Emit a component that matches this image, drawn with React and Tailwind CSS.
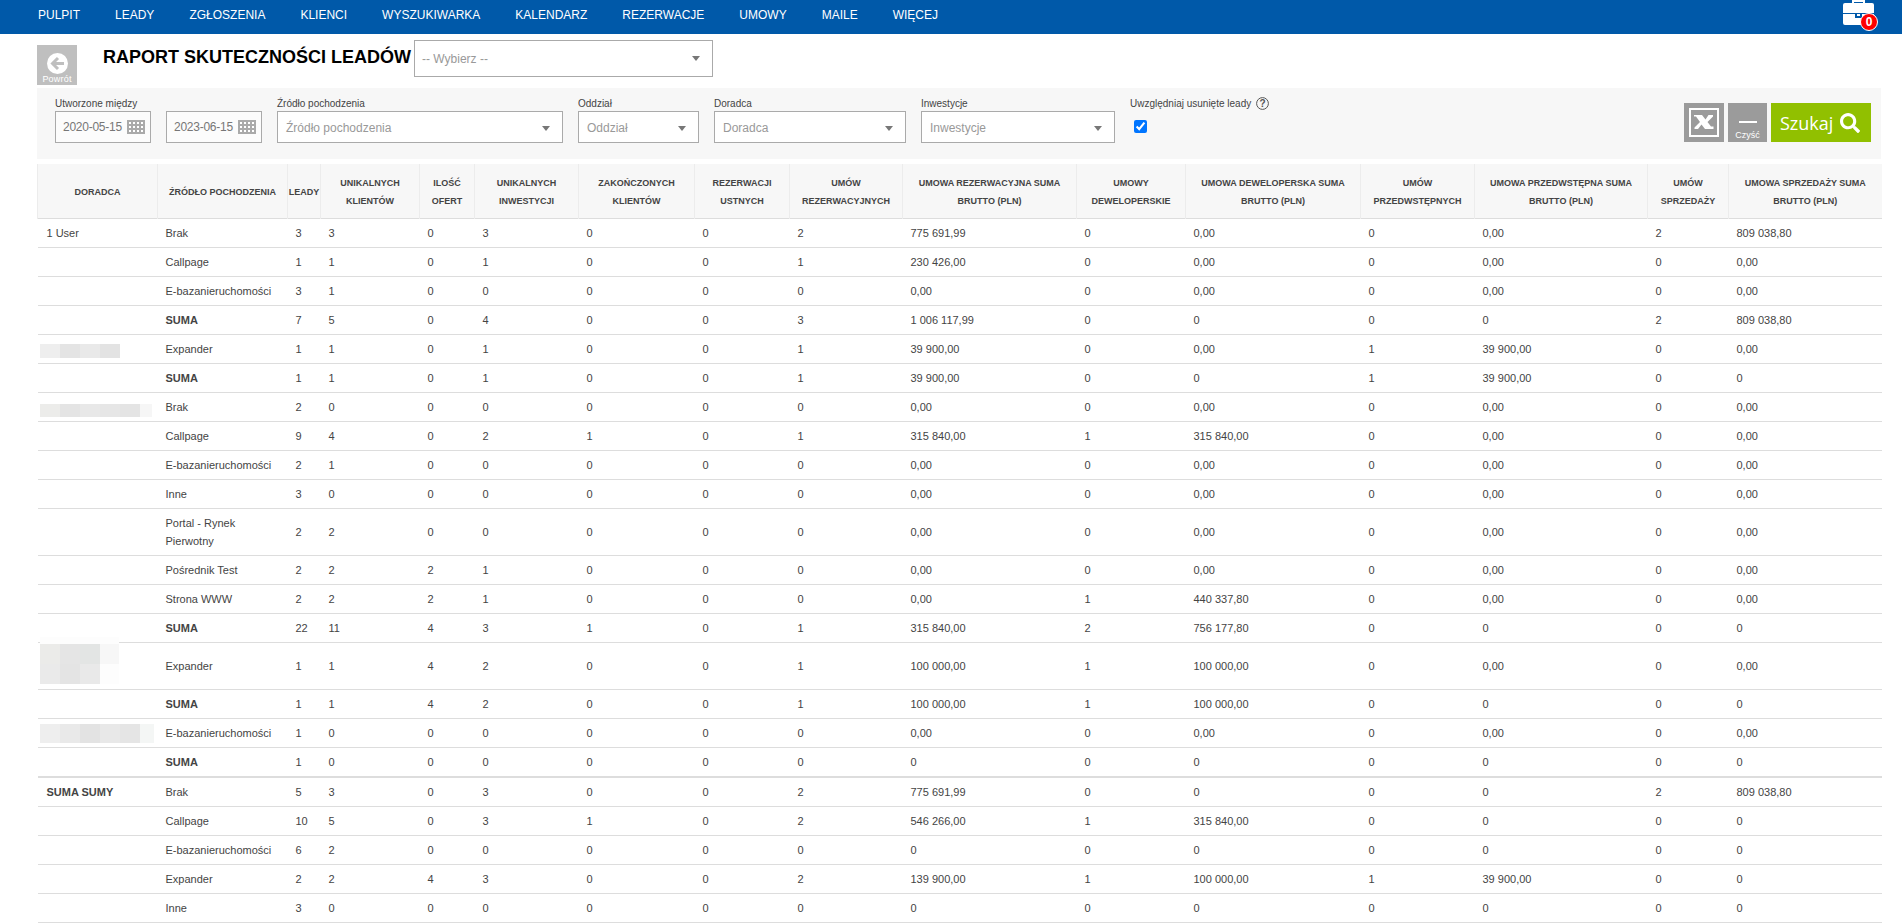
import React from 'react';
import { FaSearch } from 'react-icons/fa';

const menu = [
  'PULPIT',
  'LEADY',
  'ZGŁOSZENIA',
  'KLIENCI',
  'WYSZUKIWARKA',
  'KALENDARZ',
  'REZERWACJE',
  'UMOWY',
  'MAILE',
  'WIĘCEJ',
];

const columns = [
  { lines: ['DORADCA'], width: 120 },
  { lines: ['ŹRÓDŁO POCHODZENIA'], width: 130 },
  { lines: ['LEADY'], width: 33 },
  { lines: ['UNIKALNYCH', 'KLIENTÓW'], width: 99 },
  { lines: ['ILOŚĆ', 'OFERT'], width: 55 },
  { lines: ['UNIKALNYCH', 'INWESTYCJI'], width: 104 },
  { lines: ['ZAKOŃCZONYCH', 'KLIENTÓW'], width: 116 },
  { lines: ['REZERWACJI', 'USTNYCH'], width: 95 },
  { lines: ['UMÓW', 'REZERWACYJNYCH'], width: 113 },
  { lines: ['UMOWA REZERWACYJNA SUMA', 'BRUTTO (PLN)'], width: 174 },
  { lines: ['UMOWY', 'DEWELOPERSKIE'], width: 109 },
  { lines: ['UMOWA DEWELOPERSKA SUMA', 'BRUTTO (PLN)'], width: 175 },
  { lines: ['UMÓW', 'PRZEDWSTĘPNYCH'], width: 114 },
  { lines: ['UMOWA PRZEDWSTĘPNA SUMA', 'BRUTTO (PLN)'], width: 173 },
  { lines: ['UMÓW', 'SPRZEDAŻY'], width: 81 },
  { lines: ['UMOWA SPRZEDAŻY SUMA', 'BRUTTO (PLN)'], width: 153 },
];

const rows = [
  ['1 User', 'Brak', '3', '3', '0', '3', '0', '0', '2', '775 691,99', '0', '0,00', '0', '0,00', '2', '809 038,80'],
  ['', 'Callpage', '1', '1', '0', '1', '0', '0', '1', '230 426,00', '0', '0,00', '0', '0,00', '0', '0,00'],
  ['', 'E-bazanieruchomości', '3', '1', '0', '0', '0', '0', '0', '0,00', '0', '0,00', '0', '0,00', '0', '0,00'],
  ['', 'SUMA', '7', '5', '0', '4', '0', '0', '3', '1 006 117,99', '0', '0', '0', '0', '2', '809 038,80'],
  ['mask:a', 'Expander', '1', '1', '0', '1', '0', '0', '1', '39 900,00', '0', '0,00', '1', '39 900,00', '0', '0,00'],
  ['', 'SUMA', '1', '1', '0', '1', '0', '0', '1', '39 900,00', '0', '0', '1', '39 900,00', '0', '0'],
  ['mask:b', 'Brak', '2', '0', '0', '0', '0', '0', '0', '0,00', '0', '0,00', '0', '0,00', '0', '0,00'],
  ['', 'Callpage', '9', '4', '0', '2', '1', '0', '1', '315 840,00', '1', '315 840,00', '0', '0,00', '0', '0,00'],
  ['', 'E-bazanieruchomości', '2', '1', '0', '0', '0', '0', '0', '0,00', '0', '0,00', '0', '0,00', '0', '0,00'],
  ['', 'Inne', '3', '0', '0', '0', '0', '0', '0', '0,00', '0', '0,00', '0', '0,00', '0', '0,00'],
  ['', 'Portal - Rynek Pierwotny', '2', '2', '0', '0', '0', '0', '0', '0,00', '0', '0,00', '0', '0,00', '0', '0,00'],
  ['', 'Pośrednik Test', '2', '2', '2', '1', '0', '0', '0', '0,00', '0', '0,00', '0', '0,00', '0', '0,00'],
  ['', 'Strona WWW', '2', '2', '2', '1', '0', '0', '0', '0,00', '1', '440 337,80', '0', '0,00', '0', '0,00'],
  ['', 'SUMA', '22', '11', '4', '3', '1', '0', '1', '315 840,00', '2', '756 177,80', '0', '0', '0', '0'],
  ['mask:c', 'Expander', '1', '1', '4', '2', '0', '0', '1', '100 000,00', '1', '100 000,00', '0', '0,00', '0', '0,00'],
  ['', 'SUMA', '1', '1', '4', '2', '0', '0', '1', '100 000,00', '1', '100 000,00', '0', '0', '0', '0'],
  ['mask:d', 'E-bazanieruchomości', '1', '0', '0', '0', '0', '0', '0', '0,00', '0', '0,00', '0', '0,00', '0', '0,00'],
  ['', 'SUMA', '1', '0', '0', '0', '0', '0', '0', '0', '0', '0', '0', '0', '0', '0'],
];

const totals = [
  ['SUMA SUMY', 'Brak', '5', '3', '0', '3', '0', '0', '2', '775 691,99', '0', '0', '0', '0', '2', '809 038,80'],
  ['', 'Callpage', '10', '5', '0', '3', '1', '0', '2', '546 266,00', '1', '315 840,00', '0', '0', '0', '0'],
  ['', 'E-bazanieruchomości', '6', '2', '0', '0', '0', '0', '0', '0', '0', '0', '0', '0', '0', '0'],
  ['', 'Expander', '2', '2', '4', '3', '0', '0', '2', '139 900,00', '1', '100 000,00', '1', '39 900,00', '0', '0'],
  ['', 'Inne', '3', '0', '0', '0', '0', '0', '0', '0', '0', '0', '0', '0', '0', '0'],
];

// Hidden advisor names
const Mask = ({ type }) => {
  if (type === 'a') {
    return (
      <div className="flow-root h-[18px]">
        <div className="mt-1 -ml-[7px] flex h-3.5">
          <div className="w-5 bg-[#eeeeee]" />
          <div className="w-5 bg-[#e4e4e4]" />
          <div className="w-5 bg-[#e9e9e9]" />
          <div className="w-5 bg-[#e3e3e3]" />
        </div>
      </div>
    );
  }
  if (type === 'b') {
    return (
      <div className="flow-root h-[18px]">
        <div className="mt-1.5 -ml-[7px] flex h-[13px]">
          <div className="w-5 bg-[#ececea]" />
          <div className="w-5 bg-[#e4e4e4]" />
          <div className="w-5 bg-[#e8e8e8]" />
          <div className="w-5 bg-[#e6e6e6]" />
          <div className="w-5 bg-[#e4e4e4]" />
          <div className="w-3 bg-[#f6f6f6]" />
        </div>
      </div>
    );
  }
  if (type === 'c') {
    return (
      <div className="flow-root h-9">
        <div className="relative z-10 -mt-[11px] -ml-[7px] w-[79px] bg-[#fdfdfd] pt-[7px]">
          <div className="flex h-5">
            <div className="w-5 bg-[#ebebe9]" />
            <div className="w-5 bg-[#e5e5e5]" />
            <div className="w-5 bg-[#e3e5e4]" />
            <div className="w-[19px] bg-[#f7f7f7]" />
          </div>
          <div className="flex h-5">
            <div className="w-5 bg-[#eaeaea]" />
            <div className="w-5 bg-[#e4e4e4]" />
            <div className="w-5 bg-[#e9e9e9]" />
          </div>
        </div>
      </div>
    );
  }
  return (
    <div className="flow-root h-[18px]">
      <div className="-ml-[7px] flex h-[19px]">
        <div className="w-5 bg-[#eeeeee]" />
        <div className="w-5 bg-[#e9e9e9]" />
        <div className="w-5 bg-[#e3e3e3]" />
        <div className="w-5 bg-[#e8e8e8]" />
        <div className="w-5 bg-[#e5e5e5]" />
        <div className="w-3.5 shrink-0 bg-[#f4f6f5]" />
      </div>
    </div>
  );
};

const Arrow = () => (
  <svg width="8" height="5" viewBox="0 0 8 5" className="shrink-0">
    <path d="M0 0h8L4 5z" fill="#777" />
  </svg>
);

const Calendar = () => (
  <svg width="18" height="14" viewBox="0 0 18 14" shapeRendering="crispEdges">
    <rect width="18" height="14" fill="#aaa" />
    {[2, 6, 10].map((y) =>
      [2, 6, 10, 14].map((x) => (
        <rect key={`${x}-${y}`} x={x} y={y} width="2" height="2" fill="#fff" />
      ))
    )}
  </svg>
);

const DateField = ({ value }) => (
  <div className="flex h-8 w-24 items-center justify-between border border-[#aaa] bg-[#fcfcfc] pr-[5px] pl-[7px]">
    <span className="text-xs tracking-[-0.25px] text-[#777]">{value}</span>
    <Calendar />
  </div>
);

const SelectField = ({ label, width }) => (
  <div className={width}>
    <div className="h-[15px] text-[10px] leading-[15px] text-[#444]">{label}</div>
    <div className="flex h-8 items-center justify-between border border-[#aaa] bg-white pt-0.5 pr-3 pl-2">
      <span className="text-xs text-[#999]">{label}</span>
      <Arrow />
    </div>
  </div>
);

const Row = ({ row }) => (
  <tr className="border-b border-[#ddd]">
    {row.map((cell, i) => (
      <td
        key={i}
        className={`py-[5px] align-middle ${i === 0 ? 'pl-[9px]' : 'pl-2'} ${i === 1 ? 'pr-4' : ''} ${cell.startsWith('SUMA') ? 'font-bold' : ''}`}
      >
        {cell.startsWith('mask:') ? <Mask type={cell.slice(5)} /> : cell}
      </td>
    ))}
  </tr>
);

const ReportTable = () => (
  <table className="mt-[5px] w-[1844px] table-fixed border-collapse text-[11px] leading-[18px] text-[#444]">
    <colgroup>
      {columns.map((col, i) => (
        <col key={i} style={{ width: col.width }} />
      ))}
    </colgroup>
    <thead>
      <tr className="h-[54px] border-b border-[#ddd] bg-[#f7f7f7] text-[9px]">
        {columns.map((col, i) => (
          <th key={i} className="border-l border-[#ececec] p-0 pt-0.5 text-center font-bold whitespace-nowrap">
            {col.lines.map((line) => (
              <div key={line}>{line}</div>
            ))}
          </th>
        ))}
      </tr>
    </thead>
    <tbody>
      {rows.map((row, i) => (
        <Row key={i} row={row} />
      ))}
    </tbody>
    <tbody className="border-t-2 border-[#ddd]">
      {totals.map((row, i) => (
        <Row key={i} row={row} />
      ))}
    </tbody>
  </table>
);

export default function App() {
  return (
    <div className="h-[924px] w-[1902px] overflow-hidden bg-white font-['Liberation_Sans',sans-serif]">
      <nav className="flex h-[34px] justify-between bg-[#0059a9] pr-6 pl-[38px] text-white">
        <div className="flex gap-[35px] text-xs leading-[30px]">
          {menu.map((item) => (
            <a key={item}>{item}</a>
          ))}
        </div>
        <div className="relative w-[35px]">
          <svg width="32" height="26" viewBox="0 0 32 26">
            <path d="M10 4V1h11v3" fill="none" stroke="#fff" strokeWidth="2" />
            <path d="M2 3h27q2 0 2 2v8H0V5q0-2 2-2z" fill="#fff" />
            <path d="M0 14h12v4h7v-4h12v11H2q-2 0-2-2z" fill="#fff" />
            <path d="M14 14h3v2h-3z" fill="#fff" />
          </svg>
          <span className="absolute top-[13px] right-0 flex h-[18px] w-[18px] items-center justify-center rounded-full border border-white bg-[#f00] text-xs leading-none font-bold">
            0
          </span>
        </div>
      </nav>

      <main className="ml-[37px] w-[1844px]">
        <header className="flex h-[54px]">
          <button className="mt-[11px] flex h-10 w-10 flex-col items-center bg-[#bfbfbf] pt-2 text-[9px] leading-[11px] text-white">
            <svg width="21" height="21" viewBox="0 0 21 21" className="shrink-0">
              <circle cx="10.5" cy="10.5" r="10.5" fill="#fff" />
              <path d="M17 10.5H6M11 5l-5.500 5.500L11 16" fill="none" stroke="#bfbfbf" strokeWidth="3" />
            </svg>
            <span className="tracking-[0.2px]">Powrót</span>
          </button>
          <h1 className="mt-[11px] ml-[26px] w-[311px] text-lg leading-6 font-bold whitespace-nowrap text-black">
            RAPORT SKUTECZNOŚCI LEADÓW
          </h1>
          <div className="mt-1.5 flex h-[37px] w-[299px] items-center justify-between border border-[#aaa] pr-3 pl-[7px]">
            <span className="text-xs text-[#999]">-- Wybierz --</span>
            <Arrow />
          </div>
        </header>

        <section className="flex h-[71px] bg-[#f7f7f7] pt-2 pl-[18px]">
          <div className="w-[222px]">
            <div className="h-[15px] text-[10px] leading-[15px] text-[#444]">Utworzone między</div>
            <div className="flex gap-[15px]">
              <DateField value="2020-05-15" />
              <DateField value="2023-06-15" />
            </div>
          </div>
          <div className="flex gap-[15px]">
            <SelectField label="Źródło pochodzenia" width="w-[286px]" />
            <SelectField label="Oddział" width="w-[121px]" />
            <SelectField label="Doradca" width="w-48" />
            <SelectField label="Inwestycje" width="w-[194px]" />
            <div>
              <div className="flex h-[15px] items-center gap-[5px] text-[10px] text-[#444]">
                Uwzględniaj usunięte leady
                <svg width="13" height="13" viewBox="0 0 13 13">
                  <circle cx="6.500" cy="6.500" r="5.900" fill="none" stroke="#555" />
                  <text x="6.500" y="10" textAnchor="middle" fontSize="10" fontWeight="bold" fill="#555">?</text>
                </svg>
              </div>
              <input type="checkbox" defaultChecked className="mt-[9px] ml-1 block h-[13px] w-[13px]" />
            </div>
          </div>
          <div className="mt-[7px] mr-[10px] ml-auto flex gap-1">
            <button className="flex h-[39px] w-10 items-center justify-center bg-[#9b9b9b]">
              <svg width="30" height="29" viewBox="0 0 30 29">
                <rect x="1" y="1" width="28" height="27" fill="none" stroke="#fff" strokeWidth="2" />
                <path
                  d="M5 7h8l3.500 4.500L19.500 7H24v1.500L18.500 14l3.500 4.500h2.500V21H16l-3.500-4.500L9 21H5.500v-1.500L11 14 7 8.500H5z"
                  fill="#fff"
                />
              </svg>
            </button>
            <button className="flex h-[39px] w-[39px] flex-col items-center bg-[#9b9b9b] pt-[18px] text-[9px] leading-[11px] text-white">
              <span className="mb-[7px] h-0.5 w-[18px] shrink-0 bg-white" />
              Czyść
            </button>
            <button className="flex h-[39px] w-[100px] items-center gap-[7px] bg-[#91c000] pl-[9px] font-['Open_Sans',sans-serif] text-lg font-medium text-white">
              Szukaj
              <FaSearch className="text-xl" />
            </button>
          </div>
        </section>

        <ReportTable />
      </main>
    </div>
  );
}
